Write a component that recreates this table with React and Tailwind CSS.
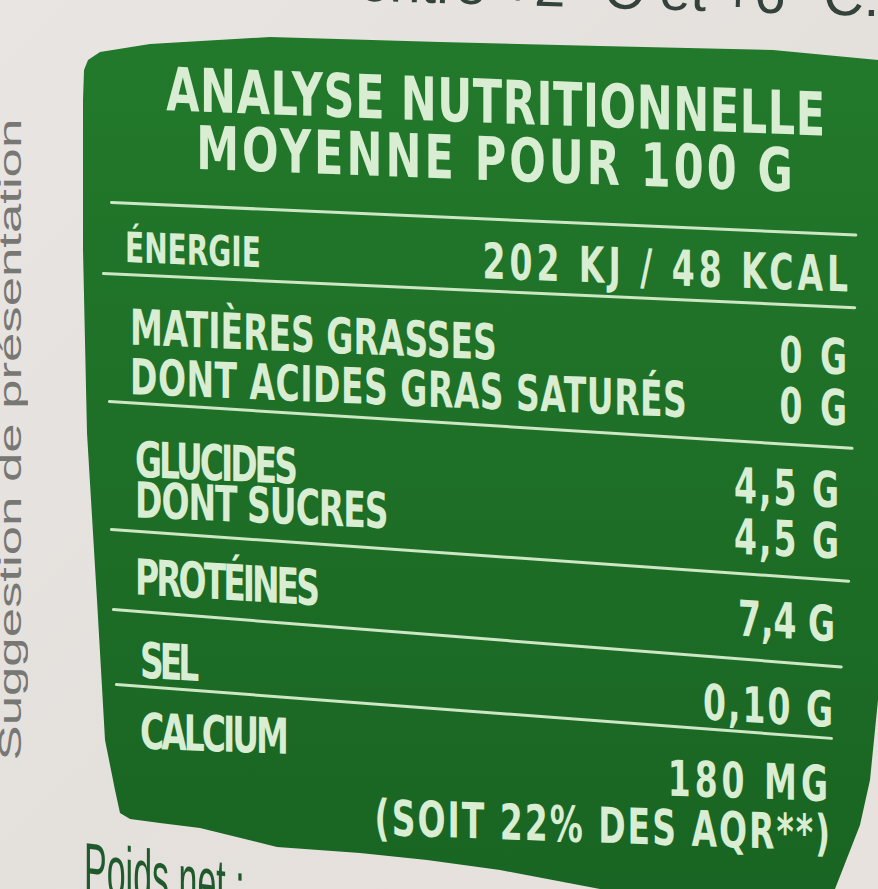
import React from 'react';

// Nutrition label on a yoghurt pot: photographed, so the panel is an irregular
// green shape and the rows slope a little more the lower they sit. The slope is
// a skew (letters stay upright, as on the curved pot), the rules are rotated.

const INK = "font-['DejaVu_Sans',sans-serif] font-bold text-[33px] leading-[32.5px] text-[#d8edd2]";

function Rule({ className }) {
  return <div className={`h-[3px] origin-left rounded-full bg-[#cde6c4] ${className}`} />;
}

function NutritionPanel() {
  return (
    <div className="h-[854px] w-[798px] shrink-0 bg-linear-to-b from-[#22792b] via-[#1e6f27] to-[#196523] [clip-path:polygon(4px_35px,8px_25px,20px_17px,70px_9px,190px_2px,360px_7px,520px_11px,693px_15px,798px_25px,798px_665px,790px_745px,780px_790px,755px_854px,520px_854px,420px_835px,347px_825px,280px_818px,197px_812px,120px_793px,80px_788px,50px_784px,40px_778px,35px_755px,25px_705px,17px_565px,7px_398px,3px_215px,3px_65px)]">
      <div className={`pl-[28px] pt-[24px] ${INK}`}>
        <div className="h-[116px]">
          <div className="w-[740px] origin-top-left skew-y-[1.57deg] scale-y-[1.4] pl-[36px] text-center text-[43px] leading-[41.4px]">
            <div className="tracking-[0.6px]">ANALYSE NUTRITIONNELLE</div>
            <div className="tracking-[3px]">MOYENNE POUR 100 G</div>
          </div>
        </div>

        <Rule className="mt-[26px] ml-[2px] w-[748px] rotate-[2.5deg]" />

        <div className="mt-[20px] h-[48px]">
          <div className="flex w-[744px] origin-top-left skew-y-[1.4deg] scale-y-[1.5] items-start justify-between pl-[17px]">
            <span className="text-[28px]">ÉNERGIE</span>
            <span className="tracking-[4px]">202 KJ / 48 KCAL</span>
          </div>
        </div>

        <Rule className="-ml-[6px] w-[755px] rotate-[2.6deg]" />

        <div className="mt-[28px] h-[97px]">
          <div className="flex w-[742px] origin-top-left skew-y-[1.6deg] scale-y-[1.5] items-start justify-between pl-[22px]">
            <div className="flex flex-col">
              <span>MATIÈRES GRASSES</span>
              <span className="tracking-[0.5px]">DONT ACIDES GRAS SATURÉS</span>
            </div>
            <div className="flex flex-col items-end tracking-[3px]">
              <span>0 G</span>
              <span className="mt-[1px]">0 G</span>
            </div>
          </div>
        </div>

        <Rule className="w-[747px] rotate-[3.6deg]" />

        <div className="mt-[32px] h-[93px]">
          <div className="flex w-[733px] origin-top-left skew-y-[1.67deg] scale-y-[1.5] items-start justify-between pl-[27px]">
            <div className="flex flex-col">
              <span className="tracking-[-3px]">GLUCIDES</span>
              <span className="-mt-[6px] tracking-[-1px]">DONT SUCRES</span>
            </div>
            <div className="flex flex-col items-end tracking-[2px]">
              <span>4,5 G</span>
              <span className="mt-[1px]">4,5 G</span>
            </div>
          </div>
        </div>

        <Rule className="ml-[2px] w-[742px] rotate-[4deg]" />

        <div className="mt-[21px] h-[56px]">
          <div className="flex w-[727px] origin-top-left skew-y-[2.33deg] scale-y-[1.5] items-start justify-between pl-[27px]">
            <span className="tracking-[-3px]">PROTÉINES</span>
            <span className="pt-[3px]">7,4 G</span>
          </div>
        </div>

        <Rule className="ml-[4px] w-[733px] rotate-[4.5deg]" />

        <div className="mt-[24px] h-[48px]">
          <div className="flex w-[727px] origin-top-left skew-y-[2.33deg] scale-y-[1.5] items-start justify-between pl-[32px]">
            <span className="tracking-[-4px]">SEL</span>
            <span className="pt-[5px] tracking-[2px]">0,10 G</span>
          </div>
        </div>

        <Rule className="ml-[7px] w-[720px] rotate-[4.3deg]" />

        <div className="mt-[21px]">
          <div className="flex w-[724px] origin-top-left skew-y-[1.33deg] scale-y-[1.5] items-start justify-between pl-[32px]">
            <span className="tracking-[-3px]">CALCIUM</span>
            <div className="flex flex-col items-end pt-[19px] tracking-[2px]">
              <span className="tracking-[4px]">180 MG</span>
              <span>(SOIT 22% DES AQR**)</span>
            </div>
          </div>
        </div>
      </div>
    </div>
  );
}

export default function App() {
  return (
    <div className="h-[889px] w-[878px] overflow-hidden bg-linear-to-br from-[#e9e5e2] via-[#e4e0dc] to-[#e7e2dd] font-['Liberation_Sans',Arial,sans-serif]">
      <div className="h-[35px] overflow-hidden">
        <div className="-mt-[57px] flex origin-left rotate-[1.7deg] justify-between whitespace-nowrap pl-[6px] text-[56px] leading-[56px] text-[#33423a]">
          <span className="translate-y-[8px]">/</span>
          <span className="-mr-[2px]">conserver entre +2 °C et +6 °C.</span>
        </div>
      </div>

      <div className="flex">
        <div className="flex w-[80px] shrink-0 flex-col justify-end pb-[129px]">
          <div className="origin-bottom scale-y-[1.7]">
            <div className="-ml-[4px] w-[30px] rotate-180 whitespace-nowrap text-[31px] leading-[30px] text-[#777774] [writing-mode:vertical-rl]">
              Suggestion de présentation
            </div>
          </div>
        </div>
        <NutritionPanel />
      </div>

      <div className="-mt-[58px] ml-[84px] origin-top-left skew-y-[3.35deg] scale-y-[2.1] whitespace-nowrap text-[34px] leading-[34px] text-[#1f5a2c]">
        Poids net :
      </div>
    </div>
  );
}
